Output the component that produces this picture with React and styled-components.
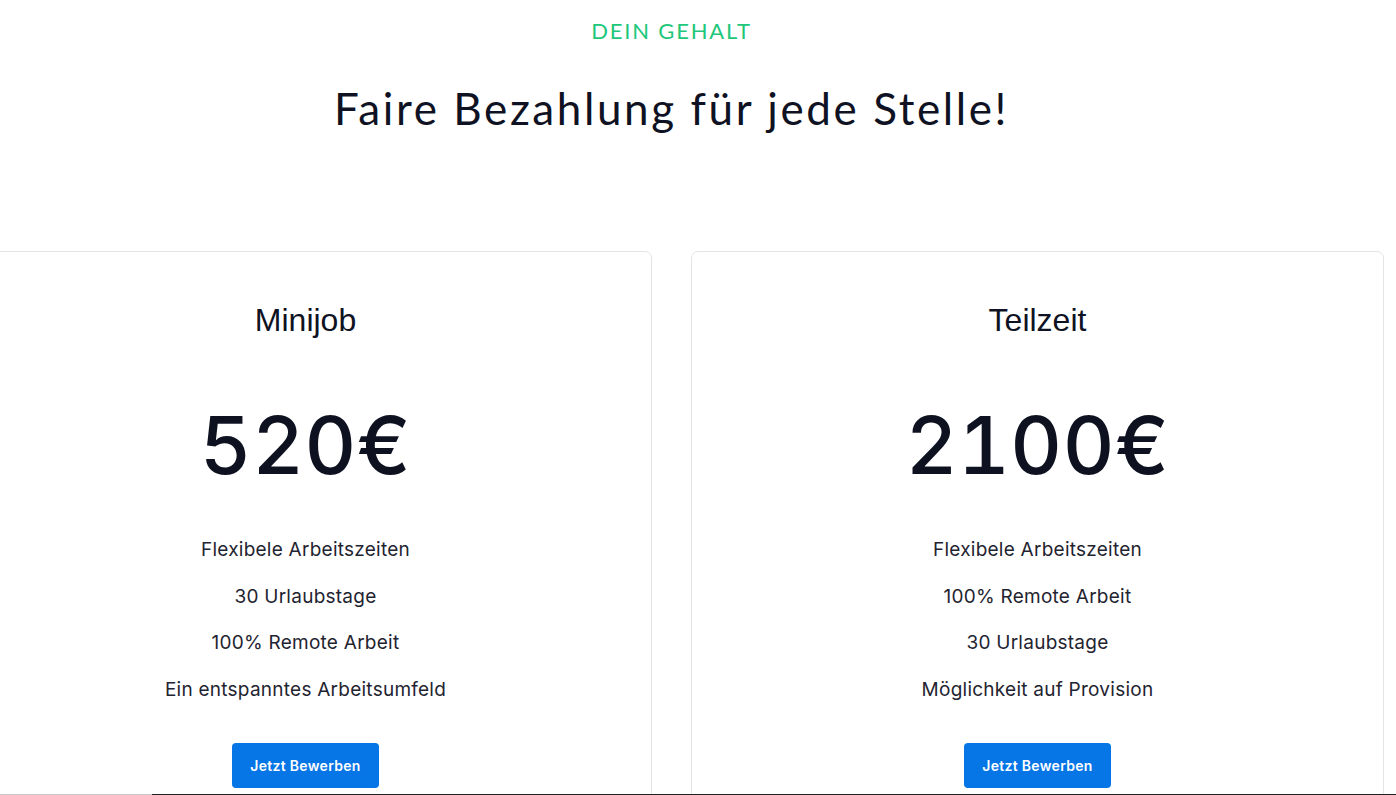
import React from "react"
import styled, { createGlobalStyle } from "styled-components"

const GlobalStyle = createGlobalStyle`
  html, body {
    margin: 0;
    padding: 0;
    overflow: hidden;
    background: #ffffff;
  }
  body {
    font-family: Inter, "Liberation Sans", sans-serif;
    color: #111827;
  }
`

const plans = [
  {
    title: "Minijob",
    price: "520€",
    perks: [
      "Flexibele Arbeitszeiten",
      "30 Urlaubstage",
      "100% Remote Arbeit",
      "Ein entspanntes Arbeitsumfeld",
    ],
  },
  {
    title: "Teilzeit",
    price: "2100€",
    perks: [
      "Flexibele Arbeitszeiten",
      "100% Remote Arbeit",
      "30 Urlaubstage",
      "Möglichkeit auf Provision",
    ],
  },
]

const App = () => (
  <>
    <GlobalStyle />
    <SalarySection>
      <Eyebrow>DEIN GEHALT</Eyebrow>
      <Heading>Faire Bezahlung für jede Stelle!</Heading>
      <CardGrid>
        {plans.map((plan) => (
          <PlanCard key={plan.title}>
            <PlanTitle>{plan.title}</PlanTitle>
            <PlanPrice>{plan.price}</PlanPrice>
            <PerkList>
              {plan.perks.map((perk) => (
                <Perk key={perk}>{perk}</Perk>
              ))}
            </PerkList>
            <ApplyBtn type="button">Jetzt Bewerben</ApplyBtn>
          </PlanCard>
        ))}
      </CardGrid>
    </SalarySection>
    <BottomEdge />
  </>
)

export default App

const SalarySection = styled.section`
  display: flex;
  flex-direction: column;
  align-items: center;
  padding-top: 18px;
  width: 1425px;
  margin-left: -41px;
`

const Eyebrow = styled.p`
  margin: 0;
  font-family: Lato, "Noto Sans", sans-serif;
  font-size: 22px;
  line-height: 26px;
  letter-spacing: 1.8px;
  color: #20c77a;
`

const Heading = styled.h2`
  margin: 38px 0 0;
  font-family: Lato, "Noto Sans", sans-serif;
  font-weight: 400;
  font-size: 44px;
  line-height: 53px;
  letter-spacing: 2.6px;
  color: #0f1222;
`

const CardGrid = styled.div`
  display: grid;
  grid-template-columns: 1fr 1fr;
  gap: 39px;
  width: 100%;
  margin-top: 116px;
`

const PlanCard = styled.article`
  display: flex;
  flex-direction: column;
  align-items: center;
  border: 1px solid #e4e4e4;
  border-radius: 7px;
  padding: 49px 24px 60px;
`

const PlanTitle = styled.h3`
  margin: 0;
  font-family: "Liberation Sans", Arial, sans-serif;
  font-weight: 400;
  font-size: 32px;
  line-height: 38px;
  color: #0f1222;
`

const PlanPrice = styled.div`
  margin-top: 66px;
  font-family: Inter, "Liberation Sans", sans-serif;
  font-size: 80px;
  line-height: 80px;
  font-weight: 500;
  font-variant-numeric: tabular-nums;
  letter-spacing: 0.5px;
  color: #0d1120;
`

const PerkList = styled.ul`
  list-style: none;
  margin: 51px 0 0;
  padding: 0;
  display: flex;
  flex-direction: column;
  align-items: center;
  gap: 19.7px;
`

const Perk = styled.li`
  font-family: Inter, "Liberation Sans", sans-serif;
  font-size: 19px;
  line-height: 27px;
  letter-spacing: 0.25px;
  color: #1f2430;
`

const ApplyBtn = styled.button`
  margin-top: 40px;
  width: 147px;
  height: 45px;
  border: none;
  border-radius: 4px;
  background: #0675e6;
  color: #ffffff;
  font-family: Inter, "Liberation Sans", sans-serif;
  font-size: 14px;
  font-weight: 600;
  letter-spacing: 0.3px;
  cursor: pointer;
`

const BottomEdge = styled.div`
  position: fixed;
  left: 0;
  right: 0;
  bottom: 0;
  height: 1px;
  background: linear-gradient(to right, #c8c8c8 0, #c8c8c8 152px, #202020 152px);
`
